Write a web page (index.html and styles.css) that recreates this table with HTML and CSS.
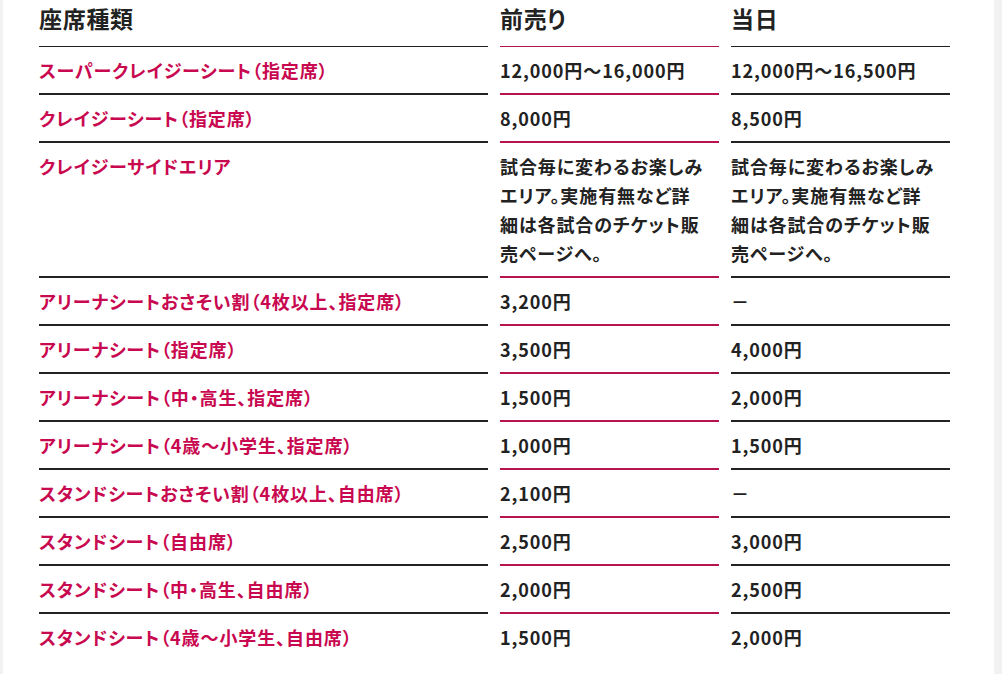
FILE: index.html
```html
<!DOCTYPE html>
<html lang="ja">
<head>
<meta charset="utf-8">
<link rel="stylesheet" href="styles.css">
</head>
<body>
<div class="page">
  <div class="content">
    <table class="price">
      <colgroup><col class="c1"><col class="c2"><col class="c3"></colgroup>
      <thead>
        <tr><th>座席種類</th><th class="adv">前売り</th><th>当日</th></tr>
      </thead>
      <tbody>
        <tr><th>スーパークレイジーシート（指定席）</th><td class="adv">12,000円～16,000円</td><td>12,000円～16,500円</td></tr>
        <tr><th>クレイジーシート（指定席）</th><td class="adv">8,000円</td><td>8,500円</td></tr>
        <tr><th>クレイジーサイドエリア</th><td class="adv">試合毎に変わるお楽しみ<br>エリア。実施有無など詳<br>細は各試合のチケット販<br>売ページへ。</td><td>試合毎に変わるお楽しみ<br>エリア。実施有無など詳<br>細は各試合のチケット販<br>売ページへ。</td></tr>
        <tr><th>アリーナシートおさそい割（4枚以上、指定席）</th><td class="adv">3,200円</td><td>－</td></tr>
        <tr><th>アリーナシート（指定席）</th><td class="adv">3,500円</td><td>4,000円</td></tr>
        <tr><th>アリーナシート（中・高生、指定席）</th><td class="adv">1,500円</td><td>2,000円</td></tr>
        <tr><th>アリーナシート（4歳～小学生、指定席）</th><td class="adv">1,000円</td><td>1,500円</td></tr>
        <tr><th>スタンドシートおさそい割（4枚以上、自由席）</th><td class="adv">2,100円</td><td>－</td></tr>
        <tr><th>スタンドシート（自由席）</th><td class="adv">2,500円</td><td>3,000円</td></tr>
        <tr><th>スタンドシート（中・高生、自由席）</th><td class="adv">2,000円</td><td>2,500円</td></tr>
        <tr class="last"><th>スタンドシート（4歳～小学生、自由席）</th><td class="adv">1,500円</td><td>2,000円</td></tr>
      </tbody>
    </table>
  </div>
</div>
</body>
</html>
```

FILE: styles.css
```css
html, body {
  margin: 0;
  padding: 0;
  background: #ffffff;
}
body {
  font-family: "Noto Sans CJK JP", "Noto Sans", sans-serif;
  color: #222222;
  font-feature-settings: "palt";
}
.page {
  display: flex;
  height: 674px;
  overflow: hidden;
  background: #f2f2f2;
  padding-left: 3px;
  padding-right: 8px;
}
.content {
  flex: 1;
  background: #ffffff;
}
.price {
  border-collapse: separate;
  border-spacing: 12px 0;
  margin-left: 24px;
  table-layout: fixed;
  width: 935px;
}
.c1 { width: 449px; }
.c2 { width: 219px; }
.c3 { width: 219px; }
.price th, .price td {
  text-align: left;
  vertical-align: top;
  padding: 9px 0 8px 0;
  font-weight: 700;
  font-size: 18px;
  letter-spacing: 0.05em;
  line-height: 29px;
  border-bottom: 2px solid #222222;
  white-space: nowrap;
}
.price thead th {
  font-size: 23px;
  letter-spacing: 0.03em;
  line-height: 30px;
  padding: 3px 0 13px 0;
  border-bottom: 1px solid #222222;
  color: #222222;
}
.price tbody th {
  color: #c8084f;
}
.price td.adv, .price th.adv {
  border-bottom-color: #b8124f;
}
.price tr.last th, .price tr.last td {
  border-bottom: none;
}
```
